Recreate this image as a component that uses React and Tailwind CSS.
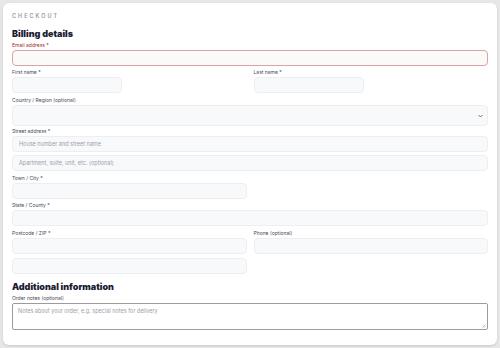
import React from 'react'

const font = { fontFamily: 'Inter, "Noto Sans", sans-serif' }

function Label({ children, red }) {
  return (
    <div className={`text-[5px] leading-[6px] mb-[2px] ${red ? 'text-[#9b2c2c]' : 'text-[#4a4a55]'}`}>
      {children}
    </div>
  )
}

function Input({ placeholder, className = '', red }) {
  return (
    <div
      className={`h-[16px] rounded-[4px] border flex items-center px-[6px] text-[5.5px] text-[#9ca0a8] ${
        red ? 'border-[#dba3a6] bg-[#fcf9f9]' : 'border-[#eceef1] bg-[#f8f9fb]'
      } ${className}`}
    >
      {placeholder}
    </div>
  )
}

export default function App() {
  return (
    <main className="w-[500px] h-[348px] bg-[#e7e7e8] p-[3px]" style={font}>
      <div className="h-[342px] bg-white rounded-[6px] shadow-sm px-[9px] pt-[10px]">
        {/* Header */}
        <div className="text-[5.5px] leading-[7px] tracking-[2px] font-semibold text-[#9a9aa2]">CHECKOUT</div>
        <h1 className="mt-[8px] text-[9px] leading-[12px] font-black text-[#1b1c33]">Billing details</h1>

        <div className="mt-[2px]">
          <Label red>Email address *</Label>
          <Input red />
        </div>

        <div className="mt-[3px] grid grid-cols-2 gap-x-[7px]">
          <div>
            <Label>First name *</Label>
            <Input className="w-[110px]" />
          </div>
          <div>
            <Label>Last name *</Label>
            <Input className="w-[110px]" />
          </div>
        </div>

        <div className="mt-[4px]">
          <Label>Country / Region (optional)</Label>
          <div className="h-[21px] rounded-[4px] border border-[#eceef1] bg-[#f8f9fb] flex items-center justify-end pr-[4px]">
            <svg width="5" height="4" viewBox="0 0 10 6" fill="none" stroke="#555" strokeWidth="1.6">
              <path d="M1 1l4 4 4-4" />
            </svg>
          </div>
        </div>

        <div className="mt-[2px]">
          <Label>Street address *</Label>
          <Input placeholder="House number and street name" />
          <Input className="mt-[3px]" placeholder="Apartment, suite, unit, etc. (optional)" />
        </div>

        <div className="mt-[4px] grid grid-cols-2 gap-x-[7px]">
          <div>
            <Label>Town / City *</Label>
            <Input />
          </div>
        </div>

        <div className="mt-[3px]">
          <Label>State / County *</Label>
          <Input />
        </div>

        <div className="mt-[4px] grid grid-cols-2 gap-x-[7px]">
          <div>
            <Label>Postcode / ZIP *</Label>
            <Input />
            <Input className="mt-[4px]" />
          </div>
          <div>
            <Label>Phone (optional)</Label>
            <Input />
          </div>
        </div>

        <h2 className="mt-[7px] text-[9px] leading-[12px] font-black text-[#1b1c33]">Additional information</h2>
        <div className="mt-[2px]">
          <Label>Order notes (optional)</Label>
          <div className="relative h-[27px] rounded-[2px] border border-[#9c9c9c] bg-white px-[5px] pt-[4px] text-[5.5px] leading-[7px] text-[#9ca0a8]">
            Notes about your order, e.g. special notes for delivery
            <svg className="absolute right-[1px] bottom-[1px]" width="4" height="4" viewBox="0 0 4 4" stroke="#999" strokeWidth="0.6">
              <path d="M0.5 3.5L3.5 0.5M2 3.5L3.5 2" />
            </svg>
          </div>
        </div>
      </div>
    </main>
  )
}
